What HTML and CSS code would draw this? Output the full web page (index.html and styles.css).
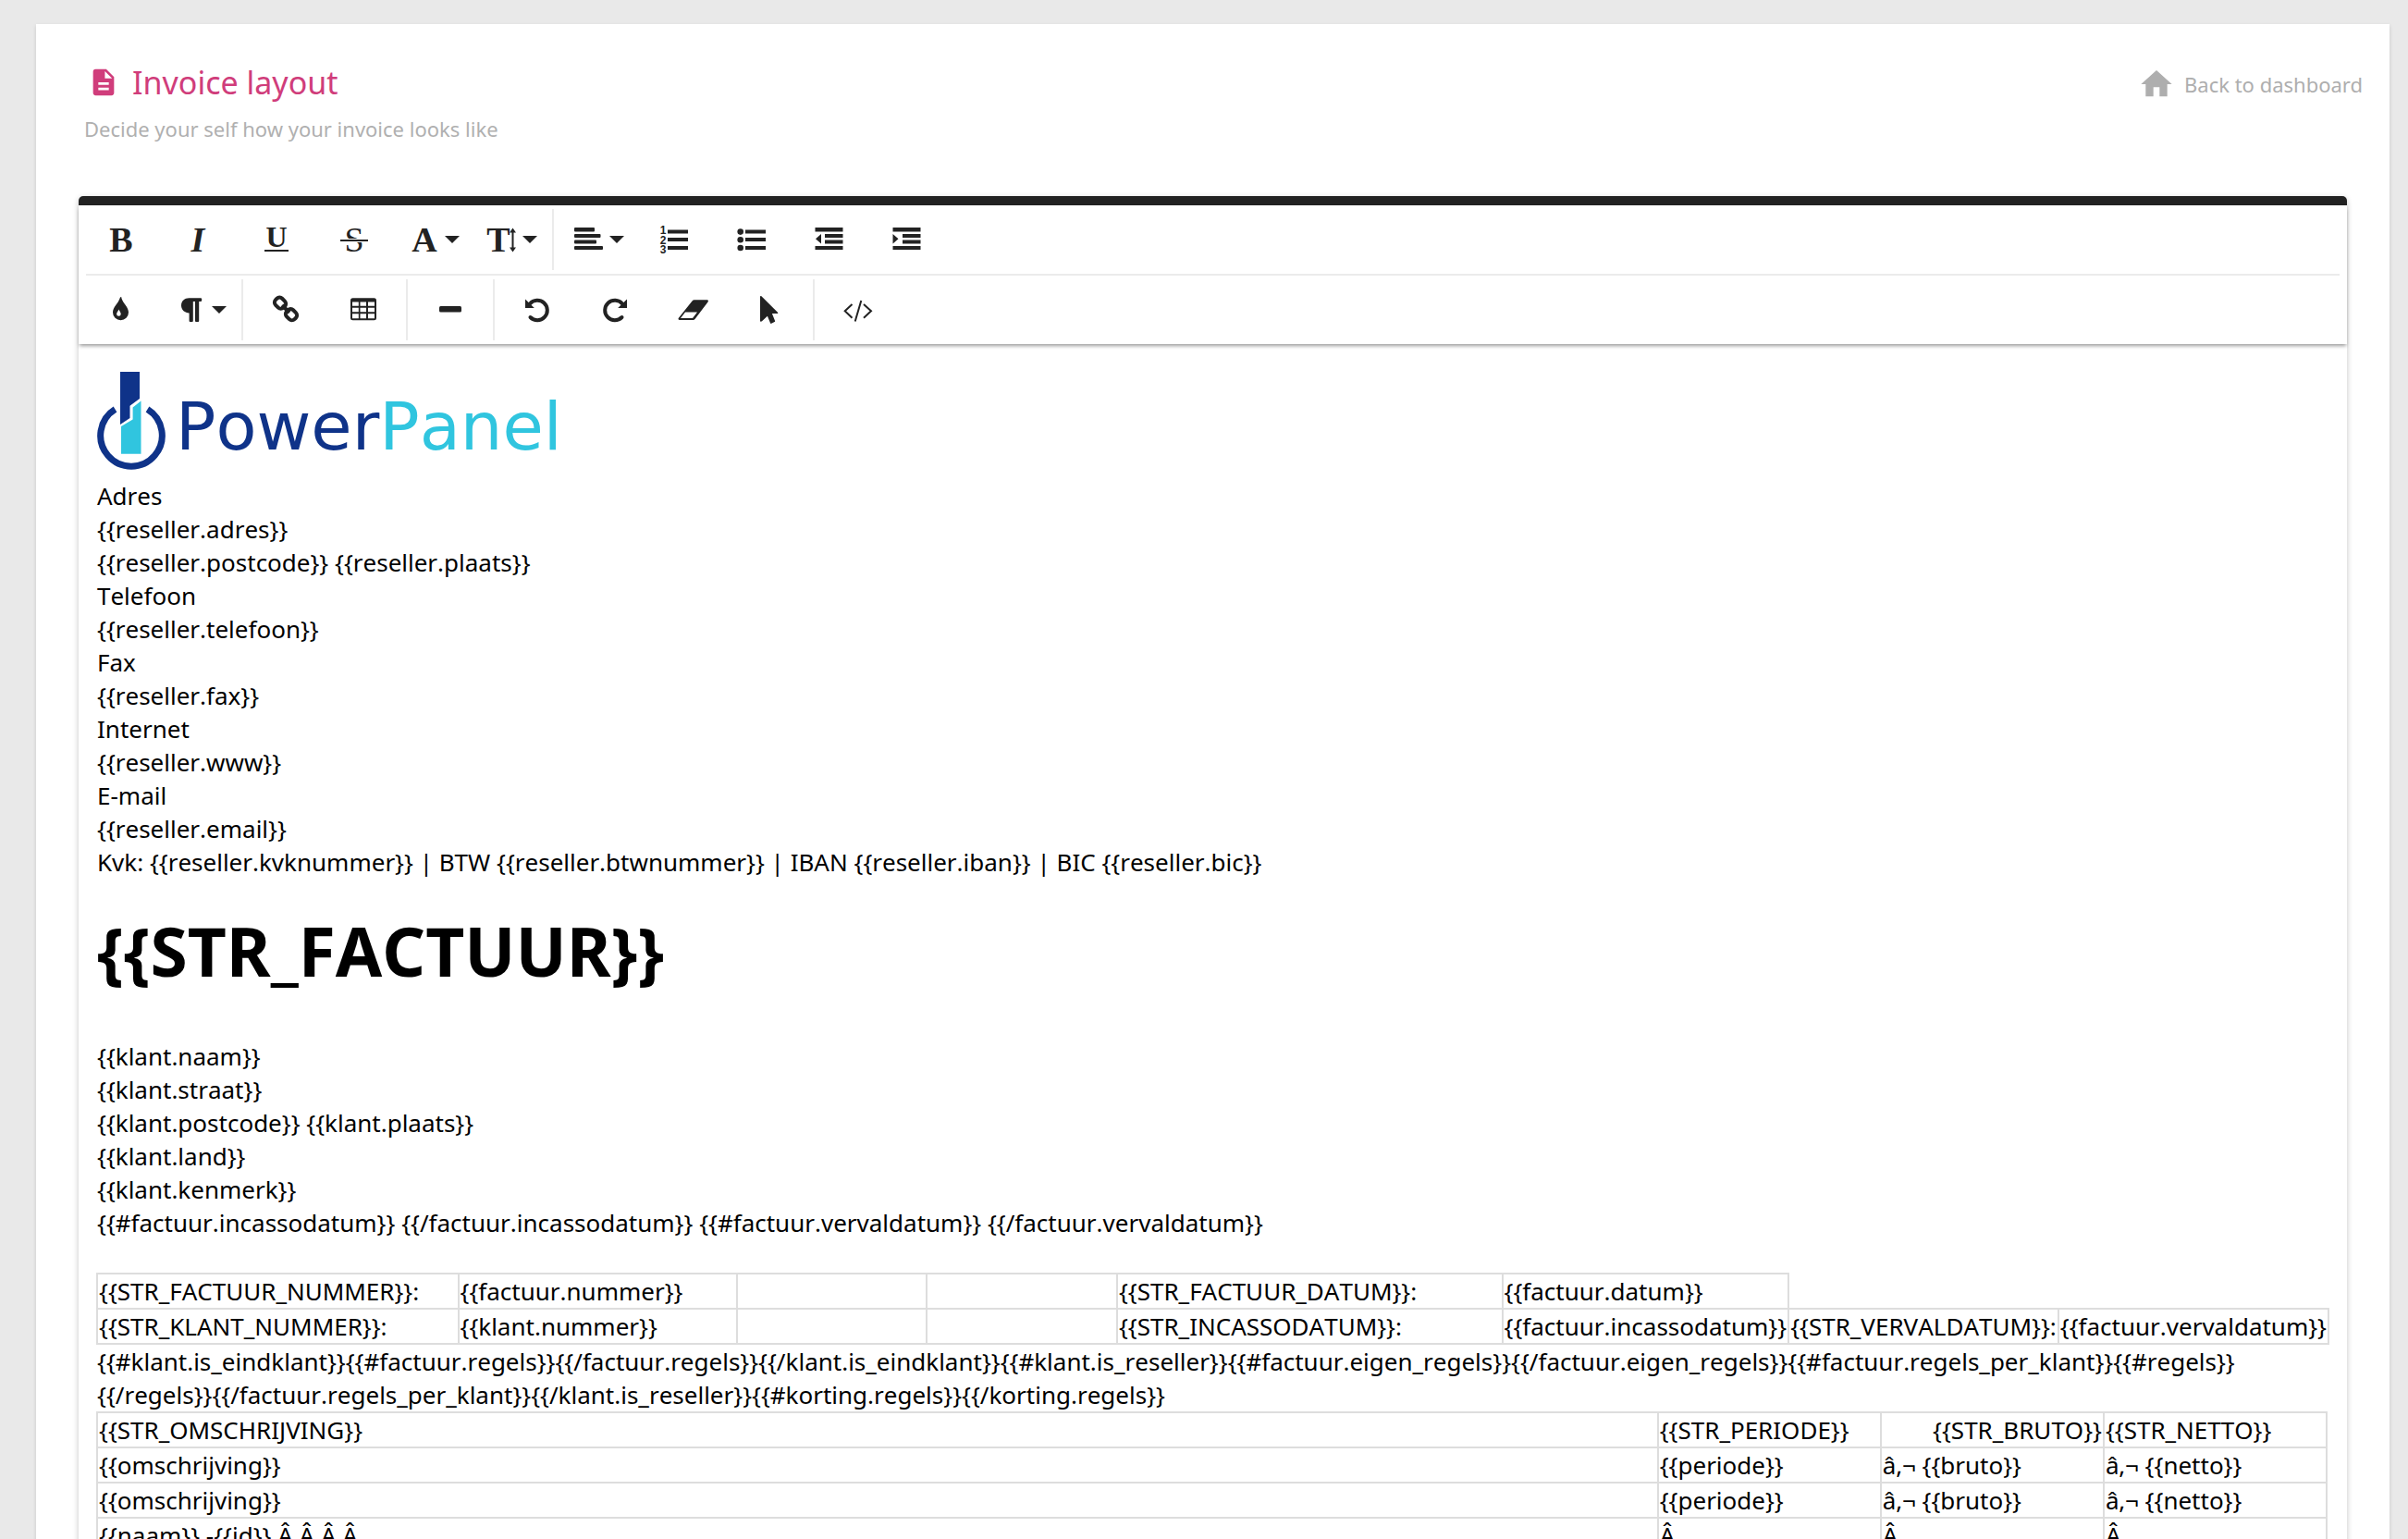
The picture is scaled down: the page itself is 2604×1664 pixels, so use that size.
FILE: index.html
```html
<!DOCTYPE html>
<html lang="en">
<head>
<meta charset="utf-8">
<title>Invoice layout</title>
<link rel="stylesheet" href="styles.css">
</head>
<body>
<main class="card">
  <header class="card-header">
    <div class="heading">
      <h2 class="title">
        <svg class="title-icon" viewBox="0 0 24 24" aria-hidden="true"><path d="M14 2H6a2 2 0 0 0-2 2v16a2 2 0 0 0 2 2h12a2 2 0 0 0 2-2V8zM16 18H8v-2h8zM16 14H8v-2h8zM13 9V3.500L18.500 9z"/></svg>
        <span>Invoice layout</span>
      </h2>
      <p class="subtitle">Decide your self how your invoice looks like</p>
    </div>
    <a class="back" href="#">
      <svg class="back-icon" viewBox="0 0 24 24" aria-hidden="true"><path d="M10 20v-6h4v6h5v-8h3L12 3 2 12h3v8z"/></svg>
      <span>Back to dashboard</span>
    </a>
  </header>

  <section class="editor">
    <div class="toolbar" role="toolbar" aria-label="Formatting">
      <div class="tool-row">
        <button class="tool" type="button" aria-label="Bold"><svg viewBox="0 0 76 66"><text class="letter" x="38" y="46">B</text></svg></button>
        <button class="tool" type="button" aria-label="Italic"><svg viewBox="0 0 76 66"><text class="letter slanted" x="37" y="46">I</text></svg></button>
        <button class="tool" type="button" aria-label="Underline"><svg viewBox="0 0 76 66"><text class="letter small" x="38" y="41">U</text><path d="M25 44h26v2H25z"/></svg></button>
        <button class="tool" type="button" aria-label="Strikethrough"><svg viewBox="0 0 76 66"><text class="letter light" x="38" y="46">S</text><path class="paper" d="M26 32h24v4H26z"/><path d="M23 33h30v2H23z"/></svg></button>
        <button class="tool" type="button" aria-label="Font family"><svg viewBox="0 0 76 66"><text class="letter" x="30" y="46">A</text><path d="M52 29h16l-8 8z"/></svg></button>
        <button class="tool" type="button" aria-label="Font size"><svg viewBox="0 0 76 66"><text class="letter" x="26" y="46">T</text><path d="M41.500 20.500l3.500 5h-2.500v16h2.500l-3.500 5-3.500-5h2.500v-16H38zM52 29h16l-8 8z"/></svg></button>
        <span class="divider"></span>
        <button class="tool" type="button" aria-label="Align"><svg viewBox="0 0 76 66"><rect x="14" y="20" width="22" height="4.500" rx="1"/><rect x="14" y="27" width="28.500" height="4" rx="1"/><rect x="14" y="33.500" width="24" height="4" rx="1"/><rect x="14" y="40" width="31" height="4" rx="1"/><path d="M52 29h16l-8 8z"/></svg></button>
        <button class="tool" type="button" aria-label="Ordered list"><svg viewBox="0 0 76 66"><text class="digit" x="26" y="27">1</text><text class="digit" x="26" y="38">2</text><text class="digit" x="26" y="48">3</text><path d="M31 22.500h22v4H31zM31 31h22v4H31zM31 40h22v4H31z"/></svg></button>
        <button class="tool" type="button" aria-label="Unordered list"><svg viewBox="0 0 76 66"><circle cx="25.700" cy="24.600" r="3.300"/><circle cx="25.700" cy="33.200" r="3.300"/><circle cx="25.700" cy="42" r="3.300"/><path d="M31 22.500h22v4H31zM31 31h22v4H31zM31 40h22v4H31z"/></svg></button>
        <button class="tool" type="button" aria-label="Decrease indent"><svg viewBox="0 0 76 66"><path d="M22.500 20h30v4.500h-30zM33 27h19.500v4H33zM33 33.500h19.500v4H33zM22.500 40h30v4h-30zM29 27v10.500L23 32.200z"/></svg></button>
        <button class="tool" type="button" aria-label="Increase indent"><svg viewBox="0 0 76 66"><path d="M22.500 20h30v4.500h-30zM33 27h19.500v4H33zM33 33.500h19.500v4H33zM22.500 40h30v4h-30zM22.500 27v10.500l6-5.300z"/></svg></button>
      </div>
      <div class="tool-row">
        <button class="tool" type="button" aria-label="Colors"><svg viewBox="0 0 76 66"><path fill-rule="evenodd" d="M38 19c-.9 0-1.200.8-1.500 1.800-1.500 5-7.500 9.200-7.500 15A8.500 8.500 0 0 0 46 35.800c0-5.800-6-10-7.500-15-.1-1-.2-1.800-.5-1.800zM35.500 32.500c.6 2 2.200 3 2.200 5a2.300 2.300 0 0 1-4.600 0c0-2 1.900-3 2.400-5z"/></svg></button>
        <button class="tool" type="button" aria-label="Paragraph format"><svg viewBox="0 0 76 66"><path d="M27.500 20.300H40a1.200 1.200 0 0 1 1.200 1.200v1.300A1.200 1.200 0 0 1 40 24h-1.800v21a1 1 0 0 1-1 1H35a1 1 0 0 1-1-1V24h-2.200v21a1 1 0 0 1-1 1H28.600a1 1 0 0 1-1-1v-8.600C23 36.400 19 33 19 28.200s3.600-7.900 8.500-7.900zM52 29h16l-8 8z"/></svg></button>
        <span class="divider"></span>
        <button class="tool" type="button" aria-label="Insert link"><svg viewBox="0 0 76 66"><g class="line bold-line"><rect x="26" y="20.700" width="12" height="10" rx="4" transform="rotate(45 32 25.700)"/><rect x="38" y="33.200" width="12" height="10" rx="4" transform="rotate(45 44 38.200)"/><path d="M34 28l8 8"/></g></svg></button>
        <button class="tool" type="button" aria-label="Insert table"><svg viewBox="0 0 76 66"><path fill-rule="evenodd" d="M26.500 20.300h23a2.500 2.500 0 0 1 2.500 2.500v19a2.500 2.500 0 0 1-2.500 2.500h-23a2.500 2.500 0 0 1-2.500-2.500v-19a2.500 2.500 0 0 1 2.500-2.500zM26 24.500v4.300h6.800v-4.300zM34.500 24.500v4.300h6.500v-4.300zM43 24.500v4.300h7v-4.300zM26 30.700v4.600h6.800v-4.600zM34.500 30.700v4.600h6.500v-4.600zM43 30.700v4.600h7v-4.600zM26 37.300v5h6.800v-5zM34.500 37.300v5h6.500v-5zM43 37.300v5h7v-5z"/></svg></button>
        <span class="divider"></span>
        <button class="tool" type="button" aria-label="Insert horizontal line"><svg viewBox="0 0 76 66"><rect x="26" y="29" width="24" height="6.500" rx="1.500"/></svg></button>
        <span class="divider"></span>
        <button class="tool" type="button" aria-label="Undo"><svg viewBox="0 0 76 66"><path class="line heavy-line" d="M30 26.500A10.700 10.700 0 1 1 30.500 41"/><path d="M25 21.500v9.500h9.800z"/></svg></button>
        <button class="tool" type="button" aria-label="Redo"><svg viewBox="0 0 76 66"><path class="line heavy-line" d="M46 26.500A10.700 10.700 0 1 0 45.500 41"/><path d="M51 21.500v9.500h-9.800z"/></svg></button>
        <button class="tool" type="button" aria-label="Clear formatting"><svg viewBox="0 0 76 66"><path fill-rule="evenodd" d="M40 22.300h13.500c1.300 0 1.800 1.200 1 2.200L40.500 43a2.500 2.500 0 0 1-2 1H23.800c-1.200 0-1.700-1.200-.9-2.200L37.500 23.500a3 3 0 0 1 2.500-1.200zM30 35.500l-5 6.500h13l5-6.500z"/></svg></button>
        <button class="tool" type="button" aria-label="Select all"><svg viewBox="0 0 76 66"><path d="M27 18.800c0-.8.800-1 1.400-.5l17.600 17.400c.6.600.3 1.300-.5 1.300h-5.600l3.200 8c.2.500 0 .9-.5 1.100l-3.400 1.700c-.5.200-1 0-1.200-.5l-3.100-7.600-5.900 5.600c-.8.800-2 .500-2-.5z"/></svg></button>
        <span class="divider"></span>
        <button class="tool" type="button" aria-label="Code view"><svg viewBox="0 0 76 66"><path class="line thin-line" d="M32.500 27l-7.800 7.300 7.800 7.500M42.300 23l-6.600 22.500M45 27l8 7.300-8 7.500"/></svg></button>
      </div>
    </div>

    <div class="document" contenteditable="true" spellcheck="false">
      <svg class="logo" viewBox="0 0 500 106" role="img" aria-label="PowerPanel">
        <path class="ring" d="M19.500 40.500A33.300 33.300 0 1 0 54.500 40.500"/>
        <path class="navy" d="M25 0h21v29l-10.500 7.700V50L25 57z"/>
        <path class="cyan" d="M47.500 31.500v57.200H26V59l12.600-7.500V38.600z"/>
        <text class="wordmark navy" x="85" y="84">Power<tspan class="cyan">Panel</tspan></text>
      </svg>
      <div>Adres<br>{{reseller.adres}}<br>{{reseller.postcode}} {{reseller.plaats}}<br>Telefoon<br>{{reseller.telefoon}}<br>Fax<br>{{reseller.fax}}<br>Internet<br>{{reseller.www}}<br>E-mail<br>{{reseller.email}}<br>Kvk: {{reseller.kvknummer}} | BTW {{reseller.btwnummer}} | IBAN {{reseller.iban}} | BIC {{reseller.bic}}</div>
      <h1 class="invoice-title">{{STR_FACTUUR}}</h1>
      <div>{{klant.naam}}<br>{{klant.straat}}<br>{{klant.postcode}} {{klant.plaats}}<br>{{klant.land}}<br>{{klant.kenmerk}}<br>{{#factuur.incassodatum}} {{/factuur.incassodatum}} {{#factuur.vervaldatum}} {{/factuur.vervaldatum}}</div>
      <table class="grid meta">
        <colgroup><col class="c-label"><col class="c-value"><col class="c-blank"><col class="c-blank"><col class="c-date"><col><col><col></colgroup>
        <tbody>
          <tr><td>{{STR_FACTUUR_NUMMER}}:</td><td>{{factuur.nummer}}</td><td></td><td></td><td>{{STR_FACTUUR_DATUM}}:</td><td>{{factuur.datum}}</td></tr>
          <tr><td>{{STR_KLANT_NUMMER}}:</td><td>{{klant.nummer}}</td><td></td><td></td><td>{{STR_INCASSODATUM}}:</td><td>{{factuur.incassodatum}}</td><td>{{STR_VERVALDATUM}}:</td><td>{{factuur.vervaldatum}}</td></tr>
        </tbody>
      </table>
      <div>{{#klant.is_eindklant}}{{#factuur.regels}}{{/factuur.regels}}{{/klant.is_eindklant}}{{#klant.is_reseller}}{{#factuur.eigen_regels}}{{/factuur.eigen_regels}}{{#factuur.regels_per_klant}}{{#regels}} {{/regels}}{{/factuur.regels_per_klant}}{{/klant.is_reseller}}{{#korting.regels}}{{/korting.regels}}</div>
      <table class="grid">
        <colgroup><col><col class="c-amount"><col class="c-amount"><col class="c-amount"></colgroup>
        <tbody>
          <tr><td>{{STR_OMSCHRIJVING}}</td><td>{{STR_PERIODE}}</td><td class="right">{{STR_BRUTO}}</td><td>{{STR_NETTO}}</td></tr>
          <tr><td>{{omschrijving}}</td><td>{{periode}}</td><td>â‚¬ {{bruto}}</td><td>â‚¬ {{netto}}</td></tr>
          <tr><td>{{omschrijving}}</td><td>{{periode}}</td><td>â‚¬ {{bruto}}</td><td>â‚¬ {{netto}}</td></tr>
          <tr><td>{{naam}} -{{id}} Â Â Â Â </td><td>Â </td><td>Â </td><td>Â </td></tr>
        </tbody>
      </table>
    </div>
  </section>
</main>
</body>
</html>
```
FILE: styles.css
```css
* {
  box-sizing: border-box;
}

html,
body {
  height: 100%;
}

body {
  margin: 0;
  padding: 26px 20px 0 39px;
  overflow: hidden;
  background: #e9e9e9;
  color: #000;
  font-family: "Noto Sans", sans-serif;
  font-size: 26px;
  line-height: 36px;
}

.card {
  min-height: 100%;
  padding: 43px 46px;
  background: #fff;
  box-shadow: 0 2px 4px rgba(0, 0, 0, 0.15);
}

.card-header {
  display: flex;
  justify-content: space-between;
  align-items: flex-start;
  margin-bottom: 58px;
}

.heading {
  padding-left: 6px;
}

.title {
  display: flex;
  align-items: center;
  gap: 14px;
  margin: 0;
  padding-left: 4px;
  color: #d03d7b;
  font-size: 34px;
  font-weight: 400;
  line-height: 40px;
}

.title-icon {
  width: 34px;
  height: 34px;
  fill: currentColor;
}

.subtitle {
  margin: 15px 0 0;
  color: #b0b0b0;
  font-size: 22px;
  line-height: 30px;
}

.back {
  display: flex;
  align-items: center;
  gap: 10px;
  margin: 2px -17px 0 0;
  color: #aeaeae;
  font-size: 22px;
  line-height: 30px;
  text-decoration: none;
}

.back-icon {
  width: 40px;
  height: 40px;
  fill: currentColor;
}

.editor {
  border-top: 10px solid #222;
  border-radius: 5px 5px 0 0;
  box-shadow: 0 2px 6px rgba(0, 0, 0, 0.24);
}

.toolbar {
  padding: 0 8px;
  background: #fff;
  box-shadow: 0 3px 4px -1px rgba(0, 0, 0, 0.4);
}

.tool-row {
  display: flex;
  gap: 8px;
  padding: 4px 0;
}

.tool-row:first-child {
  border-bottom: 2px solid #ebebeb;
}

.tool {
  width: 76px;
  height: 66px;
  padding: 0;
  border: 0;
  background: none;
  color: #222;
}

.tool svg {
  display: block;
  width: 76px;
  height: 66px;
  fill: currentColor;
}

.tool .paper {
  fill: #fff;
}

.tool .line {
  fill: none;
  stroke: currentColor;
}

.tool .thin-line {
  stroke-width: 2;
}

.tool .bold-line {
  stroke-width: 4;
}

.tool .heavy-line {
  stroke-width: 4;
  stroke-linecap: round;
}

.letter {
  font-family: "Liberation Serif", serif;
  font-size: 38px;
  font-weight: 700;
  text-anchor: middle;
}

.letter.slanted {
  font-style: italic;
}

.letter.small {
  font-size: 32px;
}

.letter.light {
  font-weight: 400;
}

.digit {
  font-family: "Liberation Sans", sans-serif;
  font-size: 12px;
  font-weight: 700;
  text-anchor: middle;
}

.divider {
  width: 2px;
  background: #ebebeb;
}

.document {
  padding: 30px 20px;
  outline: none;
  font-kerning: none;
}

.logo {
  display: block;
  width: 500px;
  height: 106px;
  margin-bottom: 10px;
}

.logo .navy {
  fill: #0f3389;
}

.logo .cyan {
  fill: #30c5df;
}

.logo .ring {
  fill: none;
  stroke: #0f3389;
  stroke-width: 7;
}

.wordmark {
  font-family: "DejaVu Sans", sans-serif;
  font-size: 72px;
}

.invoice-title {
  margin: 30px 0 48px;
  font-size: 73px;
  font-weight: 700;
  line-height: 96px;
}

.grid {
  width: 100%;
  margin-left: -1px;
  border-collapse: collapse;
}

.grid td {
  height: 38px;
  padding: 0 1px;
  border: 2px solid #ddd;
  white-space: nowrap;
}

.grid .right {
  text-align: right;
}

.meta {
  width: calc(100% + 2px);
  margin-top: 36px;
}

.c-label {
  width: 16.2%;
}

.c-value {
  width: 12.5%;
}

.c-blank {
  width: 8.6%;
}

.c-date {
  width: 17.3%;
}

.c-amount {
  width: 10%;
}
```
